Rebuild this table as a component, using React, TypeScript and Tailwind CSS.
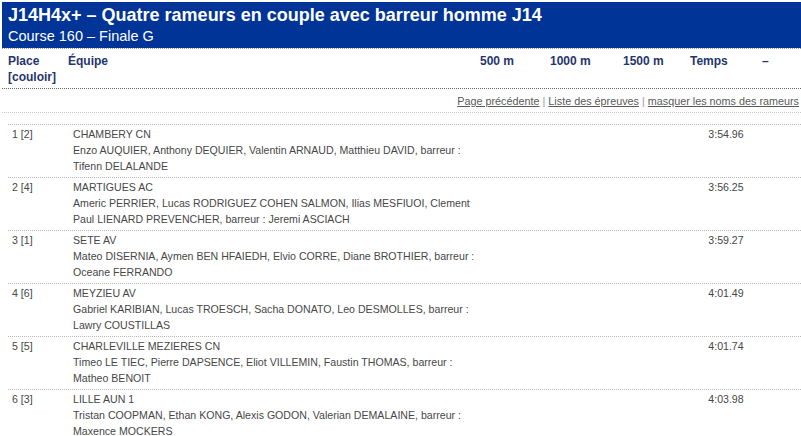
import React from "react";

interface Result {
  place: string;
  club: string;
  crew: string;
  time: string;
}

const results: Result[] = [
  {
    place: "1 [2]",
    club: "CHAMBERY CN",
    crew: "Enzo AUQUIER, Anthony DEQUIER, Valentin ARNAUD, Matthieu DAVID, barreur : Tifenn DELALANDE",
    time: "3:54.96",
  },
  {
    place: "2 [4]",
    club: "MARTIGUES AC",
    crew: "Americ PERRIER, Lucas RODRIGUEZ COHEN SALMON, Ilias MESFIUOI, Clement Paul LIENARD PREVENCHER, barreur : Jeremi ASCIACH",
    time: "3:56.25",
  },
  {
    place: "3 [1]",
    club: "SETE AV",
    crew: "Mateo DISERNIA, Aymen BEN HFAIEDH, Elvio CORRE, Diane BROTHIER, barreur : Oceane FERRANDO",
    time: "3:59.27",
  },
  {
    place: "4 [6]",
    club: "MEYZIEU AV",
    crew: "Gabriel KARIBIAN, Lucas TROESCH, Sacha DONATO, Leo DESMOLLES, barreur : Lawry COUSTILLAS",
    time: "4:01.49",
  },
  {
    place: "5 [5]",
    club: "CHARLEVILLE MEZIERES CN",
    crew: "Timeo LE TIEC, Pierre DAPSENCE, Eliot VILLEMIN, Faustin THOMAS, barreur : Matheo BENOIT",
    time: "4:01.74",
  },
  {
    place: "6 [3]",
    club: "LILLE AUN 1",
    crew: "Tristan COOPMAN, Ethan KONG, Alexis GODON, Valerian DEMALAINE, barreur : Maxence MOCKERS",
    time: "4:03.98",
  },
];

const ResultRow = ({ r }: { r: Result }) => (
  <div className="grid grid-cols-[60px_410px_212px_72px_1fr] border-t border-dotted border-[#b8b8b8] pt-[1px] pb-[3px] text-[10.6px] leading-[16px] text-[#474747]">
    <div className="pl-[4px]">{r.place}</div>
    <div className="pl-[5px]">
      <div>{r.club}</div>
      <div>{r.crew}</div>
    </div>
    <div />
    <div className="text-center">{r.time}</div>
    <div />
  </div>
);

export default function App() {
  return (
    <div className="w-[801px] h-[436px] overflow-hidden bg-white pt-[2px] pl-[2px] font-['Liberation_Sans',Arial,sans-serif]">
      <div className="bg-[#003497] px-[6px] pt-[2px] pb-[2px] text-white">
        <h1 className="text-[18px] font-bold leading-[22px]">
          J14H4x+ – Quatre rameurs en couple avec barreur homme J14
        </h1>
        <div className="text-[14.5px] leading-[20px]">Course 160 – Finale G</div>
      </div>

      <div className="border-t border-dotted border-[#999] pl-[6px]">
        <div className="grid grid-cols-[60px_412px_70px_73px_67px_72px_1fr] pt-[4px] pb-[3px] text-[12px] font-bold leading-[16px] text-[#1f3670]">
          <div>
            Place
            <br />
            [couloir]
          </div>
          <div>Équipe</div>
          <div>500 m</div>
          <div>1000 m</div>
          <div>1500 m</div>
          <div>Temps</div>
          <div>–</div>
        </div>
      </div>

      <div className="border-t border-dotted border-[#666] flex justify-end pr-[2px] pt-[4px] pb-[3px] text-[10.8px] leading-[16px] text-[#5a5a5a]">
        <a href="#" className="underline">Page précédente</a>
        <span className="px-[3px] text-[#999]">|</span>
        <a href="#" className="underline">Liste des épreuves</a>
        <span className="px-[3px] text-[#999]">|</span>
        <a href="#" className="underline">masquer les noms des rameurs</a>
      </div>

      <div className="h-[12px] border-t border-dotted border-[#c8c8c8]" />

      <div className="pl-[6px]">
        {results.map((r) => (
          <ResultRow key={r.place} r={r} />
        ))}
      </div>
    </div>
  );
}
